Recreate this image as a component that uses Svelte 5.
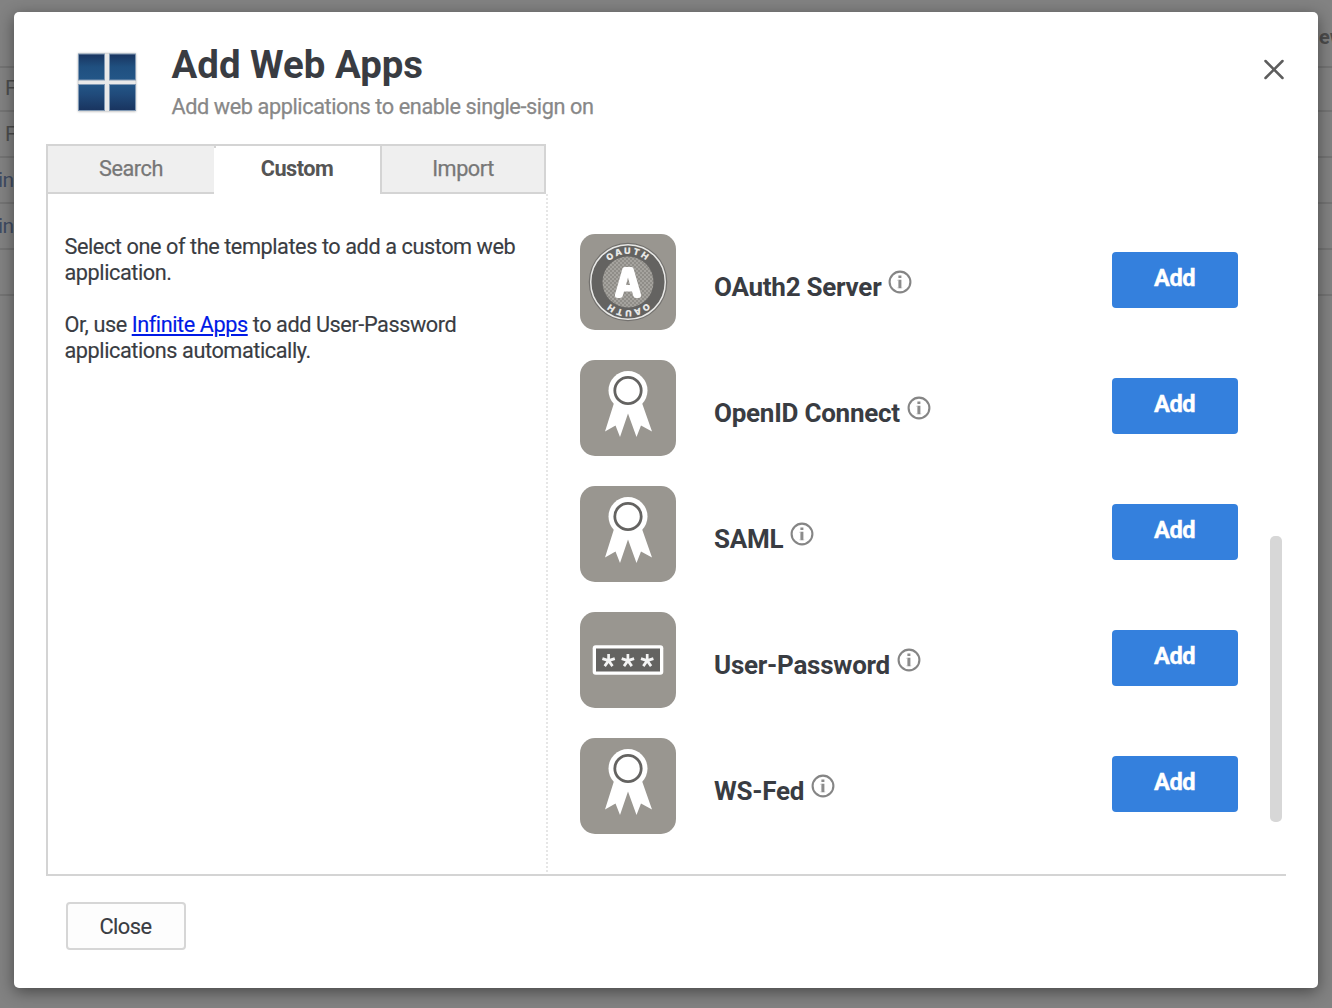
<script>
  const apps = [
    { name: 'OAuth2 Server', icon: 'oauth' },
    { name: 'OpenID Connect', icon: 'ribbon' },
    { name: 'SAML', icon: 'ribbon' },
    { name: 'User-Password', icon: 'password' },
    { name: 'WS-Fed', icon: 'ribbon' }
  ];
  const rows = [
    { left: 'F', link: false },
    { left: 'F', link: false },
    { left: 'in', link: true },
    { left: 'in', link: true },
    { left: '', link: false }
  ];
  const stars = [28.6, 47.9, 67.2];
</script>

<div class="page">
  <div class="page-head"><span>ew</span></div>
  {#each rows as row, i}
    <div class="page-row" class:first={i === 0}>
      <span class:link={row.link}>{row.left}</span>
    </div>
  {/each}

  <section class="modal" aria-label="Add Web Apps">
    <header>
      <svg class="logo" width="68" height="68" viewBox="0 0 68 68">
        <defs>
          <linearGradient id="top" x1="0" y1="0" x2="0" y2="1">
            <stop offset="0" stop-color="#19345f" />
            <stop offset="0.5" stop-color="#205080" />
            <stop offset="1" stop-color="#235687" />
          </linearGradient>
          <linearGradient id="bottom" x1="0" y1="0" x2="0" y2="1">
            <stop offset="0" stop-color="#235687" />
            <stop offset="0.4" stop-color="#204a7a" />
            <stop offset="1" stop-color="#19345f" />
          </linearGradient>
          <filter id="glow" x="-20%" y="-20%" width="140%" height="140%">
            <feGaussianBlur stdDeviation="1.3" />
          </filter>
        </defs>
        <rect x="5" y="5.5" width="58" height="58" fill="#b4b4b4" filter="url(#glow)" />
        <rect x="5.5" y="6" width="57" height="57" fill="#e9e9e9" />
        <g stroke="#8199b4" stroke-width="1">
          <rect x="5.5" y="6" width="26" height="26" fill="url(#top)" />
          <rect x="36.5" y="6" width="26" height="26" fill="url(#top)" />
          <rect x="5.5" y="36.5" width="26" height="26" fill="url(#bottom)" />
          <rect x="36.5" y="36.5" width="26" height="26" fill="url(#bottom)" />
        </g>
      </svg>
      <div class="titles">
        <h1>Add Web Apps</h1>
        <p>Add web applications to enable single-sign on</p>
      </div>
      <button class="dismiss" aria-label="Dismiss">
        <svg width="24" height="24" viewBox="0 0 24 24">
          <path d="M3.5 4 20.5 21M20.5 4 3.5 21" stroke="#5d5d5d" stroke-width="2.5" stroke-linecap="round" />
        </svg>
      </button>
    </header>

    <div class="body">
      <div class="side">
        <nav>
          <button class="tab search">Search</button>
          <button class="tab active">Custom</button>
          <button class="tab import">Import</button>
        </nav>
        <div class="copy">
          <p>Select one of the templates to add a custom web<br />application.</p>
          <p>Or, use <a href="#infinite">Infinite Apps</a> to add User-Password<br />applications automatically.</p>
        </div>
      </div>

      <div class="list">
        {#each apps as app}
          <div class="app">
            <svg class="tile" width="96" height="96" viewBox="0 0 96 96">
              <rect width="96" height="96" rx="15" fill="#999690" />
              {#if app.icon === 'ribbon'}
                <path d="M34 43 25 71.5 35.5 65.5 40 77 48 53.5 56.5 77 61 65.5 72 71.5 62 43Z" fill="#fff" />
                <circle cx="48" cy="30.5" r="19.5" fill="#fff" />
                <circle cx="48" cy="30.5" r="13.2" fill="#fff" stroke="#646361" stroke-width="2.8" />
              {:else if app.icon === 'password'}
                <rect x="12.7" y="33.3" width="70.6" height="29.4" rx="3" fill="#fff" />
                <rect x="16" y="36.5" width="64" height="23" fill="#646361" />
                {#each stars as x}
                  <path
                    transform="translate({x} 48.6)"
                    d="M0 0V-6.7M0 0 6.2-2M0 0 3.9 5.5M0 0-3.9 5.5M0 0-6.2-2"
                    stroke="#f4f4f4"
                    stroke-width="2.7"
                  />
                {/each}
              {:else}
                <defs>
                  <pattern id="weave" width="4" height="4" patternUnits="userSpaceOnUse">
                    <rect width="4" height="4" fill="#8f8d88" />
                    <path d="M0 0H2V2H0ZM2 2H4V4H2Z" fill="#a5a39e" />
                  </pattern>
                  <path id="arc-top" d="M20 48A28 28 0 0 1 76 48" />
                  <path id="arc-bottom" d="M76 48A28 28 0 0 1 20 48" />
                </defs>
                <circle cx="48" cy="48" r="39.3" fill="#73716e" />
                <circle cx="48" cy="48" r="37.3" fill="#646361" stroke="#e8e8e6" stroke-width="1.5" />
                <circle cx="48" cy="48" r="25.5" fill="url(#weave)" />
                <path
                  fill-rule="evenodd"
                  d="M44.5 33H51.5Q53 33 53.5 34.5L61 60.5Q61.5 64 58 64H56Q54 64 53.3 62L52 57.5H44L42.7 62Q42 64 40 64H38Q34.5 64 35 60.5L42.5 34.5Q43 33 44.5 33ZM48 43.5 46 51H50Z"
                  fill="#fff"
                />
                <g class="ring" text-anchor="middle">
                  <text><textPath href="#arc-top" startOffset="50%">OAUTH</textPath></text>
                  <text><textPath href="#arc-bottom" startOffset="50%">OAUTH</textPath></text>
                </g>
              {/if}
            </svg>
            <div class="name">
              <span>{app.name}</span>
              <svg width="24" height="24" viewBox="0 0 24 24">
                <circle cx="12" cy="12" r="10.4" fill="none" stroke="#858585" stroke-width="2.1" />
                <path d="M10.4 5.5H13.4V8H10.4ZM10.4 9.8H13.4V18.3H10.4Z" fill="#8c8c8c" />
                <path d="M9.6 9.8H10.4V11H9.6ZM9.6 17.3H10.4V18.3H9.6ZM13.4 17.3H14.2V18.3H13.4Z" fill="#bbb" />
              </svg>
            </div>
            <button class="add">Add</button>
          </div>
        {/each}
      </div>
      <div class="scroll"><div class="thumb"></div></div>
    </div>

    <footer><button class="close">Close</button></footer>
  </section>
</div>

<style>
  :global(body) {
    margin: 0;
    overflow: hidden;
  }
  .page,
  .page * {
    box-sizing: border-box;
  }
  .page {
    position: relative;
    width: 1332px;
    height: 1008px;
    overflow: hidden;
    background: #828282;
    font-family: Roboto, 'Liberation Sans', sans-serif;
    color: #393c42;
  }
  .page-head {
    height: 68px;
    border-bottom: 2px solid #747474;
    padding: 25px 0 0 1319px;
    font-size: 20px;
    font-weight: 700;
    line-height: 24px;
    color: #4d4d4d;
  }
  .page-row {
    height: 46px;
    border-bottom: 2px solid #747474;
    padding: 10px 0 0 5px;
    font-size: 21px;
    line-height: 24px;
    color: #4d4d4d;
    letter-spacing: -0.5px;
  }
  .page-row.first {
    height: 44px;
    padding-top: 8px;
  }
  .page-row .link {
    margin-left: -7px;
    color: #3f4b63;
  }
  button {
    font: inherit;
    color: inherit;
    border: 0;
    padding: 0;
    margin: 0;
    background: none;
  }
  h1,
  p {
    margin: 0;
  }
  .modal {
    position: absolute;
    left: 14px;
    top: 12px;
    width: 1304px;
    height: 976px;
    border-radius: 5px;
    background: #fff;
    box-shadow: 0 4px 16px rgba(0, 0, 0, 0.45);
    display: flex;
    flex-direction: column;
    padding: 0 32px;
  }
  header {
    height: 132px;
    display: flex;
    align-items: flex-start;
    padding: 36px 0 0 27px;
  }
  .titles {
    padding-left: 30.5px;
    flex: 1;
    margin-top: -6px;
  }
  h1 {
    font-size: 38.4px;
    line-height: 46px;
    font-weight: 700;
    color: #393c42;
  }
  .titles p {
    margin-top: 6px;
    font-size: 21.7px;
    line-height: 26px;
    letter-spacing: -0.41px;
    color: #888;
    -webkit-text-stroke: 0.25px #888;
  }
  .dismiss {
    width: 24px;
    height: 24px;
    margin-top: 9px;
  }
  .dismiss svg,
  .logo,
  .tile {
    display: block;
  }
  .body {
    height: 732px;
    display: flex;
    border-left: 2px solid #d4d4d4;
    border-bottom: 2px solid #d4d4d4;
  }
  .side {
    width: 500px;
    display: flex;
    flex-direction: column;
  }
  nav {
    display: flex;
    width: 498px;
    height: 50px;
    border-top: 2px solid #d4d4d4;
  }
  .tab {
    font-size: 21.7px;
    line-height: 26px;
    letter-spacing: -0.45px;
    color: #777;
    background: #efefef;
    border-bottom: 2px solid #d4d4d4;
    padding-bottom: 1px;
    -webkit-text-stroke: 0.25px #777;
  }
  .search {
    width: 166px;
  }
  .active {
    width: 166px;
    background: linear-gradient(#d4d4d4, #d4d4d4) 0 0 / 2px 2px no-repeat #fff;
    border-bottom-color: #fff;
    color: #555;
    font-weight: 700;
    letter-spacing: -0.55px;
    -webkit-text-stroke: 0;
  }
  .import {
    width: 166px;
    border-left: 2px solid #d4d4d4;
    border-right: 2px solid #d4d4d4;
  }
  .copy {
    flex: 1;
    margin-bottom: 2px;
    border-right: 2px dotted #e6e6e6;
    padding: 40px 0 0 16.5px;
    font-size: 21.7px;
    line-height: 26px;
    letter-spacing: -0.43px;
    white-space: nowrap;
    -webkit-text-stroke: 0.15px currentColor;
  }
  .copy p + p {
    margin-top: 26px;
  }
  a {
    color: #001ae6;
    text-decoration: underline;
  }
  .list {
    width: 690px;
    display: flex;
    flex-direction: column;
    gap: 30px;
    padding: 90px 0 0 32px;
  }
  .app {
    display: flex;
    height: 96px;
  }
  .name {
    width: 436px;
    padding: 36px 0 0 38px;
    display: flex;
    gap: 7px;
    font-size: 26px;
    line-height: 34px;
    letter-spacing: -0.25px;
    font-weight: 700;
    white-space: nowrap;
  }
  .add {
    width: 126px;
    height: 56px;
    margin-top: 18px;
    border-radius: 4px;
    background: #3480dd;
    color: #fff;
    font-size: 23.7px;
    line-height: 28px;
    letter-spacing: -0.6px;
    font-weight: 700;
    padding: 0 1px 5px 0;
    -webkit-text-stroke: 0.35px #fff;
  }
  .ring {
    font-family: Inter, sans-serif;
    font-size: 9px;
    font-weight: 900;
    letter-spacing: 1.8px;
    fill: #e8e8e6;
  }
  .scroll {
    padding: 392px 0 0 32px;
  }
  .thumb {
    width: 12px;
    height: 286px;
    border-radius: 5px;
    background: #d7d7d7;
  }
  footer {
    padding: 26px 0 0 20px;
  }
  .close {
    display: block;
    width: 120px;
    height: 48px;
    border: 2px solid #d6d6d6;
    border-radius: 4px;
    background: #fdfdfd;
    font-size: 21.8px;
    line-height: 26px;
    letter-spacing: -0.5px;
    padding: 1px 1px 0 0;
    -webkit-text-stroke: 0.15px currentColor;
  }
</style>
